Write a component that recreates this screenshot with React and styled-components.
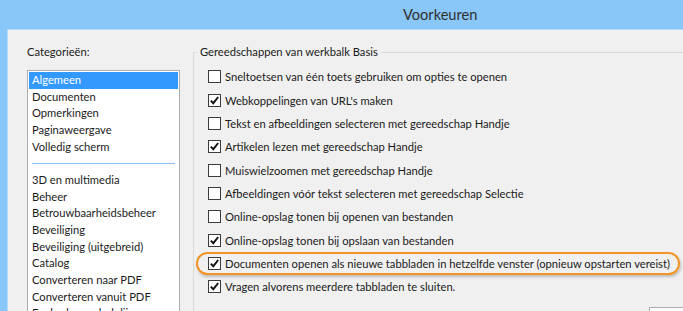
import React from 'react';
import styled, { createGlobalStyle } from 'styled-components';

const GlobalStyle = createGlobalStyle`
  html, body {
    margin: 0;
    padding: 0;
    overflow: hidden;
  }
  body {
    font-family: Lato, "Open Sans", sans-serif;
  }
`;

const Window = styled.div`
  width: 683px;
  height: 311px;
  background: #8ac7f9;
  display: flex;
  flex-direction: column;
  overflow: hidden;
`;

const TitleBar = styled.div`
  height: 29px;
  flex-shrink: 0;
  box-sizing: border-box;
  display: flex;
  align-items: center;
  padding: 0 0 1px 403px;
  font-size: 14.6px;
  color: #2f2f2f;
`;

const Client = styled.div`
  flex: 1;
  min-height: 0;
  margin-left: 7px;
  background: #f0f0f0;
  border-left: 1px solid #b7dbfb;
  border-top: 1px solid #b7dbfb;
  display: flex;
  gap: 13px;
  padding: 14px 0 0 19px;
  overflow: hidden;
  font-size: 11.2px;
  color: #1b1b1b;
`;

const Sidebar = styled.div`
  width: 153px;
  flex-shrink: 0;
  display: flex;
  flex-direction: column;
  gap: 10px;
`;

const Label = styled.div`
  line-height: 16px;
`;

const ListBox = styled.ul`
  margin: 0;
  padding: 1px;
  list-style: none;
  height: 300px;
  background: #fff;
  border: 1px solid #abadb3;
  box-sizing: border-box;
`;

const Item = styled.li`
  height: 16.67px;
  line-height: 16.67px;
  padding-left: 3px;
  white-space: nowrap;
  background: ${(p) => (p.$selected ? '#3399ff' : 'transparent')};
  color: ${(p) => (p.$selected ? '#fff' : 'inherit')};
`;

const Separator = styled.li`
  height: 16.67px;
  display: flex;
  align-items: center;
  padding: 0 3px;

  &::after {
    content: '';
    flex: 1;
    height: 1px;
    background: #8cbdea;
  }
`;

const Group = styled.fieldset`
  flex: 1;
  margin: 0 -20px 0 0;
  padding: 0;
  min-width: 0;
  border: 1px solid #dadada;
  border-bottom: none;
`;

const Legend = styled.legend`
  margin-left: 3px;
  padding: 0 3px;
  line-height: 16px;
`;

const Options = styled.div`
  padding: 5.3px 0 0 14px;
  display: flex;
  flex-direction: column;
`;

const Row = styled.div`
  position: relative;
  height: 23.33px;
  display: flex;
  align-items: center;
  gap: 4px;
  white-space: nowrap;
`;

const Box = styled.span`
  width: 13px;
  height: 13px;
  box-sizing: border-box;
  flex-shrink: 0;
  border: 1px solid #3c3c3c;
  background: #fff;
  display: flex;
  align-items: center;
  justify-content: center;
`;

const Highlight = styled.span`
  position: absolute;
  left: -12px;
  top: 0;
  width: 484px;
  height: 23px;
  box-sizing: border-box;
  border: 2px solid #f39325;
  border-radius: 12px;
  box-shadow: 1px 2px 3px rgba(0, 0, 0, 0.22);
  pointer-events: none;
`;

const Corner = styled.div`
  margin: 8px 0 0 441px;
  width: 40px;
  height: 12px;
  border: 1px solid #adadad;
  background: #fcfcfc;
`;

const Check = ({ on }) => (
  <Box>
    {on && (
      <svg width="11" height="11" viewBox="0 0 11 11">
        <path d="M1.8 5.6 L4.3 8.2 L9.2 2" fill="none" stroke="#111" strokeWidth="1.9" />
      </svg>
    )}
  </Box>
);

const categories = [
  ['Algemeen', 'Documenten', 'Opmerkingen', 'Paginaweergave', 'Volledig scherm'],
  [
    '3D en multimedia',
    'Beheer',
    'Betrouwbaarheidsbeheer',
    'Beveiliging',
    'Beveiliging (uitgebreid)',
    'Catalog',
    'Converteren naar PDF',
    'Converteren vanuit PDF',
    'Eenheden en hulplijnen',
  ],
];

const options = [
  { text: 'Sneltoetsen van één toets gebruiken om opties te openen', on: false },
  { text: "Webkoppelingen van URL's maken", on: true },
  { text: 'Tekst en afbeeldingen selecteren met gereedschap Handje', on: false },
  { text: 'Artikelen lezen met gereedschap Handje', on: true },
  { text: 'Muiswielzoomen met gereedschap Handje', on: false },
  { text: 'Afbeeldingen vóór tekst selecteren met gereedschap Selectie', on: false },
  { text: 'Online-opslag tonen bij openen van bestanden', on: false },
  { text: 'Online-opslag tonen bij opslaan van bestanden', on: true },
  {
    text: 'Documenten openen als nieuwe tabbladen in hetzelfde venster (opnieuw opstarten vereist)',
    on: true,
    marked: true,
  },
  { text: 'Vragen alvorens meerdere tabbladen te sluiten.', on: true },
];

export default function App() {
  return (
    <>
      <GlobalStyle />
      <Window>
        <TitleBar>Voorkeuren</TitleBar>
        <Client>
          <Sidebar>
            <Label>Categorieën:</Label>
            <ListBox>
              {categories[0].map((c, i) => (
                <Item key={c} $selected={i === 0}>{c}</Item>
              ))}
              <Separator />
              {categories[1].map((c) => (
                <Item key={c}>{c}</Item>
              ))}
            </ListBox>
          </Sidebar>
          <Group>
            <Legend>Gereedschappen van werkbalk Basis</Legend>
            <Options>
              {options.map((o) => (
                <Row key={o.text}>
                  <Check on={o.on} />
                  {o.text}
                  {o.marked && <Highlight />}
                </Row>
              ))}
              <Corner />
            </Options>
          </Group>
        </Client>
      </Window>
    </>
  );
}
